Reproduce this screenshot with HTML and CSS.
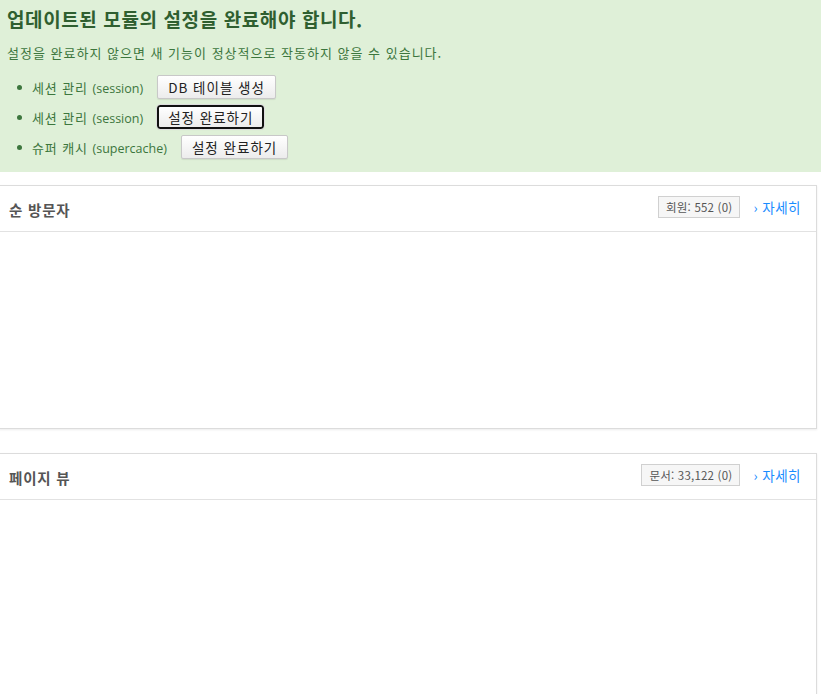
FILE: index.html
```html
<!DOCTYPE html>
<html lang="ko">
<head>
  <meta charset="UTF-8" />
  <meta name="viewport" content="width=device-width, initial-scale=1.0" />
  <title>대시보드</title>
  <link rel="stylesheet" href="styles.css">
</head>
<body>
  <div class="notice">
    <h2>업데이트된 모듈의 설정을 완료해야 합니다.</h2>
    <p>설정을 완료하지 않으면 새 기능이 정상적으로 작동하지 않을 수 있습니다.</p>
    <ul class="module-list">
      <li><span class="module-name">세션 관리 <span class="en">(session)</span></span><button class="btn">DB 테이블 생성</button></li>
      <li><span class="module-name">세션 관리 <span class="en">(session)</span></span><button class="btn btn-focus">설정 완료하기</button></li>
      <li><span class="module-name">슈퍼 캐시 <span class="en">(supercache)</span></span><button class="btn">설정 완료하기</button></li>
    </ul>
  </div>

  <div class="card">
    <div class="card-header">
      <h3>순 방문자</h3>
      <div class="card-meta">
        <span class="badge">회원: 552 (0)</span>
        <a class="more" href="#">› 자세히</a>
      </div>
    </div>
    <div class="card-body"></div>
  </div>

  <div class="card">
    <div class="card-header">
      <h3>페이지 뷰</h3>
      <div class="card-meta">
        <span class="badge">문서: 33,122 (0)</span>
        <a class="more" href="#">› 자세히</a>
      </div>
    </div>
    <div class="card-body"></div>
  </div>
</body>
</html>
```

FILE: styles.css
```css
* {
  margin: 0;
  padding: 0;
  box-sizing: border-box;
}

body {
  font-family: "Noto Sans CJK KR", "Noto Sans", sans-serif;
  background: #fff;
  color: #333;
}

.notice {
  background: #dff0d8;
  color: #3c763d;
  padding: 6px 7px 10px;
  margin-bottom: 13px;
}

.notice h2 {
  font-size: 19px;
  line-height: 26px;
  font-weight: 700;
  color: #2f5f30;
  letter-spacing: 0.6px;
  margin-bottom: 11px;
}

.notice p {
  font-size: 13px;
  line-height: 20px;
  letter-spacing: 1px;
  margin-bottom: 9px;
}

.module-list {
  list-style: none;
  padding-left: 25px;
}

.module-list li {
  position: relative;
  display: flex;
  align-items: center;
  height: 30px;
  font-size: 13px;
}

.module-list li::before {
  content: "";
  position: absolute;
  left: -15px;
  top: 13px;
  width: 5px;
  height: 5px;
  border-radius: 50%;
  background: #3c763d;
}

.module-name {
  margin-right: 14px;
  letter-spacing: 0.9px;
}

.module-name .en {
  font-family: "Open Sans", sans-serif;
  font-size: 12.5px;
  letter-spacing: 0;
}

.btn {
  font-family: "Noto Sans CJK KR", sans-serif;
  font-size: 13.5px;
  letter-spacing: 1px;
  color: #222;
  height: 24px;
  padding: 0 10px;
  border: 1px solid #c8c8c8;
  border-radius: 2px;
  background: linear-gradient(180deg, #ffffff 0%, #ececec 100%);
  box-shadow: 0 1px 1px rgba(0, 0, 0, 0.08);
  cursor: pointer;
}

.btn-focus {
  border: 2px solid #111;
  border-radius: 3px;
  padding: 0 9px;
  outline: 1px solid #ddd;
}

.card {
  margin: 0 4px 24px -1px;
  border: 1px solid #dcdcdc;
  background: #fff;
  box-shadow: 0 1px 2px rgba(0, 0, 0, 0.08);
}

.card-header {
  display: flex;
  justify-content: space-between;
  align-items: center;
  height: 46px;
  padding: 0 15px 0 9px;
  border-bottom: 1px solid #e2e2e2;
}

.card-header h3 {
  font-size: 14.5px;
  font-weight: 700;
  color: #555;
  letter-spacing: 0.8px;
  margin-top: 2px;
}

.card-meta {
  display: flex;
  align-items: center;
  gap: 13px;
  margin-top: -4px;
}

.badge {
  font-size: 11.5px;
  color: #555;
  height: 22px;
  line-height: 20px;
  padding: 0 7px;
  border: 1px solid #d0d0d0;
  background: #f6f6f6;
  letter-spacing: 0.2px;
}

.more {
  font-size: 13.5px;
  color: #1a8cff;
  text-decoration: none;
  letter-spacing: 0.5px;
}

.card-body {
  height: 196px;
}
```
